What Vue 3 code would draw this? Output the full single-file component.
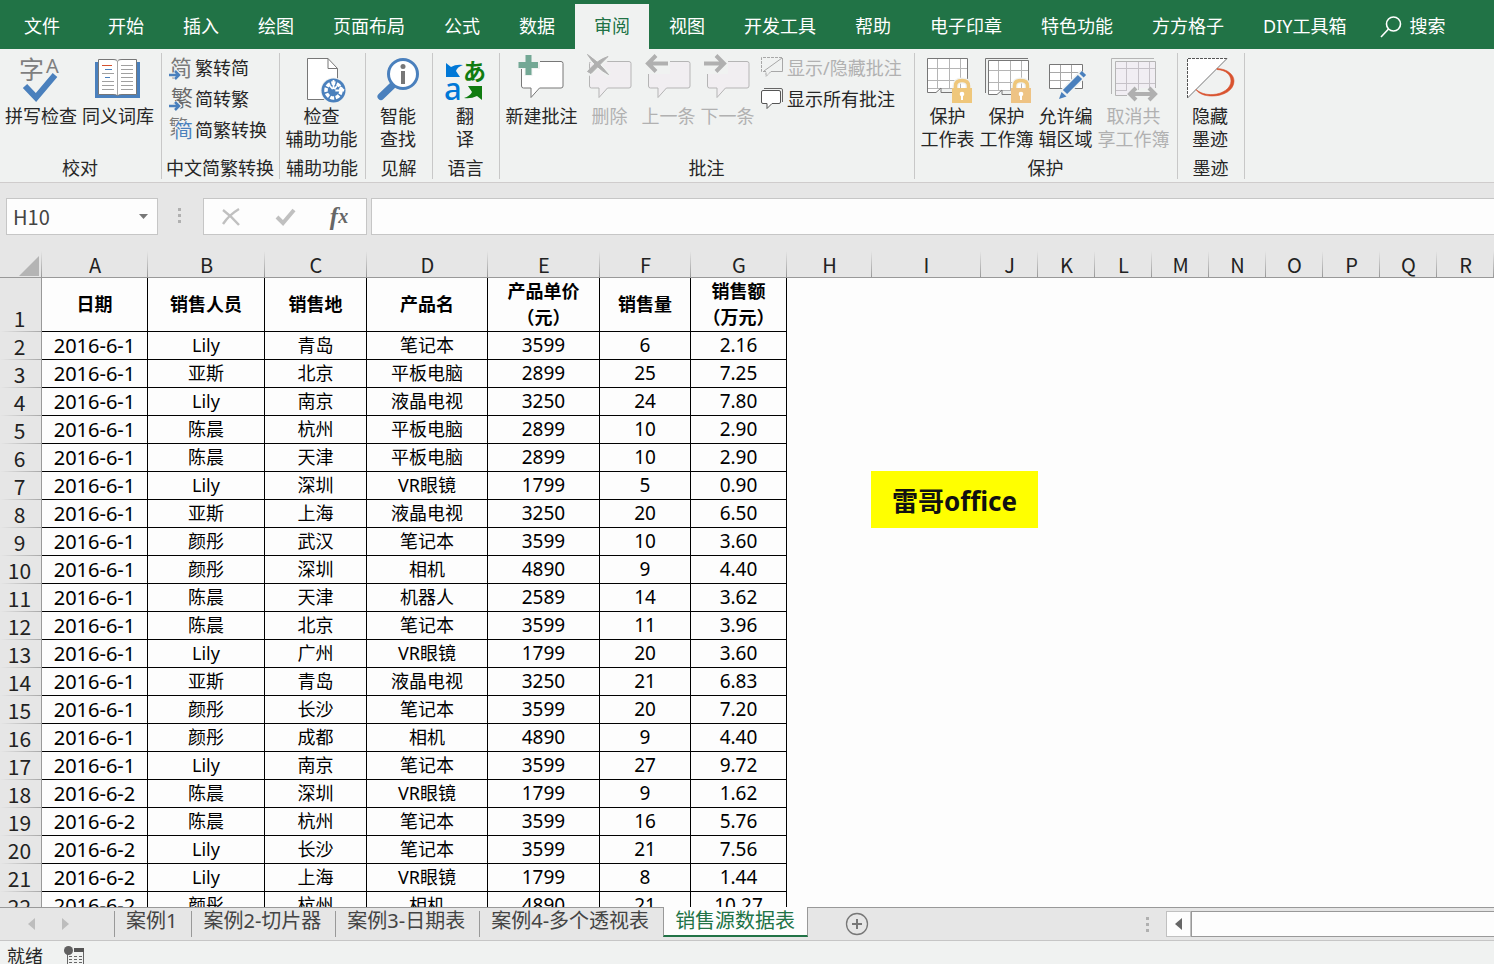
<script setup>
import { ref } from 'vue'

const menu = ['开始', '插入', '绘图', '页面布局', '公式', '数据', '审阅', '视图', '开发工具', '帮助', '电子印章', '特色功能', '方方格子', 'DIY工具箱']
const activeMenu = ref('审阅')

const cellRef = ref('H10')
const formula = ref('')

const columns = [
  ['A', 106], ['B', 117], ['C', 102], ['D', 121], ['E', 112], ['F', 91], ['G', 96], ['H', 85], ['I', 109],
  ['J', 57], ['K', 57], ['L', 57], ['M', 57], ['N', 57], ['O', 57], ['P', 57], ['Q', 57], ['R', 57]
]

const heads = [['日期'], ['销售人员'], ['销售地'], ['产品名'], ['产品单价', '（元）'], ['销售量'], ['销售额', '（万元）']]

const rows = [
  ['2016-6-1', 'Lily', '青岛', '笔记本', '3599', '6', '2.16'],
  ['2016-6-1', '亚斯', '北京', '平板电脑', '2899', '25', '7.25'],
  ['2016-6-1', 'Lily', '南京', '液晶电视', '3250', '24', '7.80'],
  ['2016-6-1', '陈晨', '杭州', '平板电脑', '2899', '10', '2.90'],
  ['2016-6-1', '陈晨', '天津', '平板电脑', '2899', '10', '2.90'],
  ['2016-6-1', 'Lily', '深圳', 'VR眼镜', '1799', '5', '0.90'],
  ['2016-6-1', '亚斯', '上海', '液晶电视', '3250', '20', '6.50'],
  ['2016-6-1', '颜彤', '武汉', '笔记本', '3599', '10', '3.60'],
  ['2016-6-1', '颜彤', '深圳', '相机', '4890', '9', '4.40'],
  ['2016-6-1', '陈晨', '天津', '机器人', '2589', '14', '3.62'],
  ['2016-6-1', '陈晨', '北京', '笔记本', '3599', '11', '3.96'],
  ['2016-6-1', 'Lily', '广州', 'VR眼镜', '1799', '20', '3.60'],
  ['2016-6-1', '亚斯', '青岛', '液晶电视', '3250', '21', '6.83'],
  ['2016-6-1', '颜彤', '长沙', '笔记本', '3599', '20', '7.20'],
  ['2016-6-1', '颜彤', '成都', '相机', '4890', '9', '4.40'],
  ['2016-6-1', 'Lily', '南京', '笔记本', '3599', '27', '9.72'],
  ['2016-6-2', '陈晨', '深圳', 'VR眼镜', '1799', '9', '1.62'],
  ['2016-6-2', '陈晨', '杭州', '笔记本', '3599', '16', '5.76'],
  ['2016-6-2', 'Lily', '长沙', '笔记本', '3599', '21', '7.56'],
  ['2016-6-2', 'Lily', '上海', 'VR眼镜', '1799', '8', '1.44'],
  ['2016-6-2', '颜彤', '杭州', '相机', '4890', '21', '10.27']
]

const sheets = ['案例1', '案例2-切片器', '案例3-日期表', '案例4-多个透视表', '销售源数据表']
const activeSheet = ref('销售源数据表')
</script>

<template>
  <div class="app">
    <nav class="menu">
      <button class="tab file">文件</button>
      <button
        v-for="m in menu"
        :key="m"
        class="tab"
        :class="{ active: m === activeMenu }"
        @click="activeMenu = m"
      >{{ m }}</button>
      <button class="tab search">
        <svg width="22" height="24" viewBox="0 0 22 24" fill="none" stroke="#fff" stroke-width="1.6">
          <circle cx="13.5" cy="9" r="7" />
          <path d="M8.5 14L1 22" />
        </svg>
        <span>搜索</span>
      </button>
    </nav>

    <section class="ribbon">
      <div class="group g-proof">
        <div class="tools">
          <button class="big w77">
            <svg width="50" height="50" viewBox="17 54 50 50">
              <text x="20" y="79" font-size="25" fill="#7f7f7f">字</text>
              <text x="47" y="73" font-size="20" fill="#7f7f7f">A</text>
              <path d="M26 86L37 97.5L56 75" fill="none" stroke="#4a80bd" stroke-width="6" />
            </svg>
            <span>拼写检查</span>
          </button>
          <button class="big w77">
            <svg width="50" height="50" viewBox="93 54 50 50">
              <path d="M95 62H140V98H95Z" fill="#4a80bd" />
              <path d="M98.5 59.5H113Q117.5 59.5 117.5 62Q117.5 59.5 122 59.5H136.5V94.5H122Q117.5 94.5 117.5 96Q117.5 94.5 113 94.5H98.5Z" fill="#fff" stroke="#777" />
              <path d="M117.5 61V95" stroke="#a6a6a6" />
              <path d="M121 65.5H133M121 69.5H133M121 73.5H133M121 77.5H133M121 81.5H133M121 85.5H133M121 89.5H133M102 73.5H114M102 81.5H114M102 85.5H114M102 89.5H114" stroke="#a0a0a0" />
              <path d="M102 65.5H112" stroke="#d35230" />
              <path d="M105 69.5H112M105 77.5H110" stroke="#4a80bd" />
            </svg>
            <span>同义词库</span>
          </button>
        </div>
        <h2>校对</h2>
      </div>

      <div class="group g-chinese">
        <div class="tools minis">
          <button class="mini">
            <svg width="26" height="30" viewBox="168 54 26 30">
              <text x="170" y="76" font-size="22" fill="#7a7a7a">简</text>
              <path d="M169 75H179M175 71L179 75L175 79" fill="none" stroke="#f0f2f1" stroke-width="5" />
              <path d="M169 75H179M175 71L179 75L175 79" fill="none" stroke="#4a80bd" stroke-width="2.5" />
            </svg>
            <span>繁转简</span>
          </button>
          <button class="mini">
            <svg width="26" height="30" viewBox="168 85 26 30">
              <text x="171" y="106" font-size="22" fill="#6a6a6a">繁</text>
              <path d="M169 106H179M175 102L179 106L175 110" fill="none" stroke="#f0f2f1" stroke-width="5" />
              <path d="M169 106H179M175 102L179 106L175 110" fill="none" stroke="#4a80bd" stroke-width="2.5" />
            </svg>
            <span>简转繁</span>
          </button>
          <button class="mini">
            <svg width="26" height="30" viewBox="168 116 26 30">
              <text x="169" y="134" font-size="19" fill="#7a7a7a">繁</text>
              <path d="M175 121H194V141H175Z" fill="#f0f2f1" />
              <text x="174" y="138" font-size="19" fill="#4a80bd">简</text>
            </svg>
            <span>简繁转换</span>
          </button>
        </div>
        <h2>中文简繁转换</h2>
      </div>

      <div class="group g-access">
        <div class="tools">
          <button class="big w77">
            <svg width="50" height="50" viewBox="297 54 50 50">
              <path d="M307.5 58.5H328L337.5 68.5V99.5H307.5Z" fill="#fff" stroke="#777" />
              <path d="M328 58.5V68.5H337.5" fill="none" stroke="#777" />
              <circle cx="333.5" cy="90.5" r="13" fill="#f0f2f1" />
              <circle cx="333.5" cy="90.5" r="12" fill="#4a80bd" />
              <circle cx="333.5" cy="90.5" r="7.5" fill="none" stroke="#fff" stroke-width="3.5" stroke-dasharray="4 1.5" />
              <path d="M333.5 80V89M330 86L333.5 90L337 86M334 90.5H344M340 87L344 90.5" fill="none" stroke="#fff" stroke-width="1.8" />
              <circle cx="333.5" cy="91" r="2" fill="#4a80bd" />
            </svg>
            <span>检查<br>辅助功能</span>
          </button>
        </div>
        <h2>辅助功能</h2>
      </div>

      <div class="group g-small">
        <div class="tools">
          <button class="big w59">
            <svg width="50" height="50" viewBox="374 54 50 50">
              <path d="M394 85L382 96.5" stroke="#4a80bd" stroke-width="7" stroke-linecap="round" />
              <circle cx="404" cy="74" r="14.5" fill="#fff" stroke="#4a80bd" stroke-width="3" />
              <circle cx="404" cy="66.5" r="2.5" fill="#777" />
              <path d="M404 71V84" stroke="#777" stroke-width="4" />
            </svg>
            <span>智能<br>查找</span>
          </button>
        </div>
        <h2>见解</h2>
      </div>

      <div class="group g-small">
        <div class="tools">
          <button class="big w59">
            <svg width="50" height="50" viewBox="441 54 50 50">
              <path d="M447 63L452 67Q457 64 464 65Q458 67 457 71L461 77H447Z" fill="#0078d7" />
              <text x="464" y="80" font-size="23" font-weight="700" fill="#107c10">あ</text>
              <text x="445" y="100" font-size="31" font-weight="500" fill="#0078d7">a</text>
              <path d="M469 86H483V100L478 96Q472 99 465 98Q471 96 473 92Z" fill="#107c10" />
            </svg>
            <span>翻<br>译</span>
          </button>
        </div>
        <h2>语言</h2>
      </div>

      <div class="group g-comment">
        <div class="tools">
          <button class="big w77">
            <svg width="50" height="50" viewBox="517 54 50 50">
              <path d="M523.5 61.5H561Q563 61.5 563 63.5V86Q563 88 561 88H539.5L531 97.5V88H523.5Q521.5 88 521.5 86V63.5Q521.5 61.5 523.5 61.5Z" fill="#fff" stroke="#777" />
              <path d="M528.5 54V76M517 65H540" stroke="#f0f2f1" stroke-width="8" />
              <path d="M528.5 55V75M518.5 65H538" stroke="#73a895" stroke-width="6" />
            </svg>
            <span>新建批注</span>
          </button>
          <button class="big w59" disabled>
            <svg width="50" height="50" viewBox="585 54 50 50">
              <path d="M591.5 61.5H629Q631 61.5 631 63.5V86Q631 88 629 88H607.5L599 97.5V88H591.5Q589.5 88 589.5 86V63.5Q589.5 61.5 591.5 61.5Z" fill="#f1eef1" stroke="#b5b5b5" />
              <path d="M587 55L609 75M609 56L588 74" stroke="#f0f2f1" stroke-width="6" />
              <path d="M587.5 54.5Q599 62 608.5 74.5Q596 68 587.5 54.5ZM608 56.5L591 73.5L587.5 71.5Q597 60 608 56.5Z" fill="#b0b0b0" stroke="#b0b0b0" />
            </svg>
            <span>删除</span>
          </button>
          <button class="big w59" disabled>
            <svg width="50" height="50" viewBox="643 54 50 50">
              <path d="M649.5 61.5H687Q689 61.5 689 63.5V86Q689 88 687 88H665.5L657 97.5V88H649.5Q647.5 88 647.5 86V63.5Q647.5 61.5 649.5 61.5Z" fill="#f1eef1" stroke="#b5b5b5" />
              <path d="M643 54H669V74H643Z" fill="#f0f2f1" />
              <path d="M667 63.5H648M655 55.5L647 63.5L655 71.5" fill="none" stroke="#b0b0b0" stroke-width="4" />
            </svg>
            <span>上一条</span>
          </button>
          <button class="big w59" disabled>
            <svg width="50" height="50" viewBox="702 54 50 50">
              <path d="M708.5 61.5H746Q748 61.5 748 63.5V86Q748 88 746 88H724.5L716 97.5V88H708.5Q706.5 88 706.5 86V63.5Q706.5 61.5 708.5 61.5Z" fill="#f1eef1" stroke="#b5b5b5" />
              <path d="M702 54H727V74H702Z" fill="#f0f2f1" />
              <path d="M703 63.5H722M715 55.5L723 63.5L715 71.5" fill="none" stroke="#b0b0b0" stroke-width="4" />
            </svg>
            <span>下一条</span>
          </button>
          <div class="minis">
            <button class="mini" disabled>
              <svg width="26" height="30" viewBox="760 54 26 30">
                <path d="M771 71.5H782.5V58" fill="none" stroke="#a8a8a8" />
                <path d="M782 57.5H761.5V71.5H766V76.5L771 71.5" fill="none" stroke="#a8a8a8" stroke-dasharray="3 1" />
                <path d="M764 71L782 58" stroke="#a8a8a8" />
              </svg>
              <span>显示/隐藏批注</span>
            </button>
            <button class="mini">
              <svg width="26" height="30" viewBox="760 85 26 30">
                <path d="M764 88.5H781Q782.5 88.5 782.5 90V102" fill="none" stroke="#666" />
                <path d="M763 90.5H779Q780.5 90.5 780.5 92V102Q780.5 103.5 779 103.5H772L767 108.5V103.5H763Q761.5 103.5 761.5 102V92Q761.5 90.5 763 90.5Z" fill="#fff" stroke="#555" />
              </svg>
              <span>显示所有批注</span>
            </button>
          </div>
        </div>
        <h2>批注</h2>
      </div>

      <div class="group g-protect">
        <div class="tools">
          <button class="big w59">
            <svg width="50" height="50" viewBox="923 54 50 50">
              <path d="M927.5 58.5H967.5V88H944L936 92.5H927.5Z" fill="#fff" />
              <path d="M937.5 58V88M949.5 58V88M960.5 58V88M927 68.5H967M927 80.5H967M927 88.5H955" stroke="#b5b5b5" />
              <path d="M967.5 82V58.5H927.5V92.5H936L941 88V92.5H954" fill="none" stroke="#777" />
              <path d="M955.5 89V86Q955.5 80.5 962 80.5Q968.5 80.5 968.5 86V89" fill="none" stroke="#f0f2f1" stroke-width="6" />
              <path d="M955.5 89V86Q955.5 80.5 962 80.5Q968.5 80.5 968.5 86V89" fill="none" stroke="#efc77b" stroke-width="3.5" />
              <path d="M952 88H972V103H952Z" fill="#efc77b" />
              <path d="M962 95V100" stroke="#fff" stroke-width="2" /><circle cx="962" cy="94" r="2.3" fill="#fff" />
            </svg>
            <span>保护<br>工作表</span>
          </button>
          <button class="big w59">
            <svg width="50" height="50" viewBox="982 54 50 50">
              <path d="M988.5 60.5H1028.5V90H1004L996 94.5H988.5Z" fill="#fff" />
              <path d="M998.5 61V90M1010.5 61V90M1021.5 61V90M988 70.5H1028M988 82.5H1028M988 90.5H1012" stroke="#b5b5b5" />
              <path d="M985.5 93V58.5H1028M1028.5 82V60.5H988.5V94.5H997L1002 90V94.5H1011" fill="none" stroke="#777" />
              <path d="M1014.5 89V86Q1014.5 80.5 1021 80.5Q1027.5 80.5 1027.5 86V89" fill="none" stroke="#f0f2f1" stroke-width="6" />
              <path d="M1014.5 89V86Q1014.5 80.5 1021 80.5Q1027.5 80.5 1027.5 86V89" fill="none" stroke="#efc77b" stroke-width="3.5" />
              <path d="M1011 88H1031V103H1011Z" fill="#eec384" />
              <path d="M1021 95V100" stroke="#fff" stroke-width="2" /><circle cx="1021" cy="94" r="2.3" fill="#fff" />
            </svg>
            <span>保护<br>工作簿</span>
          </button>
          <button class="big w59">
            <svg width="50" height="50" viewBox="1041 54 50 50">
              <path d="M1049.5 64.5H1082.5V88.5H1049.5Z" fill="#fff" stroke="#777" />
              <path d="M1060.5 65V88M1071.5 65V88M1050 72.5H1082M1050 80.5H1082" stroke="#a8a8a8" />
              <path d="M1060 97L1084 73" stroke="#f0f2f1" stroke-width="9" />
              <path d="M1065 92L1080 77M1081.5 75.5L1084 73" stroke="#4a80bd" stroke-width="6" />
              <path d="M1059 99L1061.5 92L1066.5 96.5Z" fill="#4a80bd" />
            </svg>
            <span>允许编<br>辑区域</span>
          </button>
          <button class="big w77" disabled>
            <svg width="50" height="50" viewBox="1109 54 50 50">
              <path d="M1115.5 61.5H1155.5V88H1132L1128 95H1115.5Z" fill="#f1eef3" />
              <path d="M1126.5 62V90M1138.5 62V90M1149.5 62V90M1115 68.5H1155M1115 83.5H1155M1115 90.5H1127" stroke="#c6c2c8" />
              <path d="M1111.5 94V58.5H1154M1155.5 88V61.5H1115.5V95.5H1127" fill="none" stroke="#b5b5b5" />
              <path d="M1129 94H1156M1136 88L1130 94L1136 100M1149 88L1155 94L1149 100" fill="none" stroke="#b0b0b0" stroke-width="4" />
            </svg>
            <span>取消共<br>享工作簿</span>
          </button>
        </div>
        <h2>保护</h2>
      </div>

      <div class="group g-small">
        <div class="tools">
          <button class="big w59">
            <svg width="50" height="50" viewBox="1185 54 50 50">
              <path d="M1187.5 58.5H1227L1187.5 98Z" fill="#fff" />
              <path d="M1227 58.5H1187.5V98" fill="none" stroke="#555" stroke-dasharray="3 1" />
              <path d="M1227 58.5L1187.5 98" stroke="#777" />
              <path d="M1217 68.5C1228 69 1234 75 1234 81C1234 90 1224 96 1212 96C1205 96 1199 94 1196 89.5C1200 93 1206 95 1213 94.5C1223 94 1231 88 1231 81C1231 75 1226 70 1217 69.5Z" fill="#d9532f" stroke="#d9532f" stroke-width="0.6" />
            </svg>
            <span>隐藏<br>墨迹</span>
          </button>
        </div>
        <h2>墨迹</h2>
      </div>
    </section>

    <section class="formula-bar">
      <div class="name-box">
        <input v-model="cellRef" aria-label="名称框">
        <button aria-label="展开名称框">
          <svg width="9" height="5" viewBox="0 0 9 5"><path d="M0 0H9L4.5 5Z" fill="#777" /></svg>
        </button>
      </div>
      <span class="dots"><i></i><i></i><i></i></span>
      <div class="fx-box">
        <button aria-label="取消">
          <svg width="20" height="18" viewBox="0 0 20 18" fill="none" stroke="#c0c0c0" stroke-width="2.4"><path d="M2 2Q10 8 18 17M18 1Q8 7 2 16" /></svg>
        </button>
        <button aria-label="输入">
          <svg width="20" height="18" viewBox="0 0 20 18" fill="none" stroke="#c0c0c0" stroke-width="4"><path d="M2 9L8 15L19 2" /></svg>
        </button>
        <button class="fx" aria-label="插入函数"><span>f</span><small>x</small></button>
      </div>
      <input v-model="formula" class="formula" aria-label="编辑栏">
    </section>

    <main class="grid">
      <table>
        <colgroup>
          <col class="c-num">
          <col v-for="c in columns" :key="c[0]" :style="{ width: c[1] + 'px' }">
        </colgroup>
        <thead>
          <tr>
            <th class="corner"><svg width="20" height="20" viewBox="0 0 20 20"><path d="M20 0V20H0Z" fill="#b4b4b4" /></svg></th>
            <th v-for="c in columns" :key="c[0]" class="col" scope="col">{{ c[0] }}</th>
          </tr>
        </thead>
        <tbody>
          <tr class="title">
            <th class="row" scope="row">1</th>
            <td v-for="h in heads" :key="h[0]"><div v-for="line in h" :key="line">{{ line }}</div></td>
          </tr>
          <tr v-for="(r, i) in rows" :key="i">
            <th class="row" scope="row">{{ i + 2 }}</th>
            <td v-for="(v, j) in r" :key="j" :class="{ date: j === 0, num: j > 3 }">{{ v }}</td>
          </tr>
        </tbody>
      </table>
      <div class="note">雷哥office</div>
    </main>

    <footer class="sheet-bar">
      <div class="arrows">
        <button aria-label="上一个工作表"><svg width="7" height="12" viewBox="0 0 7 12"><path d="M7 0V12L0 6Z" fill="#bdbdbd" /></svg></button>
        <button aria-label="下一个工作表"><svg width="7" height="12" viewBox="0 0 7 12"><path d="M0 0V12L7 6Z" fill="#bdbdbd" /></svg></button>
      </div>
      <button
        v-for="s in sheets"
        :key="s"
        class="sheet"
        :class="{ active: s === activeSheet }"
        @click="activeSheet = s"
      >{{ s }}</button>
      <button class="add" aria-label="新工作表">
        <svg width="24" height="24" viewBox="0 0 24 24" fill="none" stroke="#777">
          <circle cx="12" cy="12" r="10.5" stroke-width="1.3" />
          <path d="M12 7V17M7 12H17" stroke-width="2" />
        </svg>
      </button>
      <span class="dots"><i></i><i></i><i></i></span>
      <button class="scroll-left" aria-label="向左滚动"><svg width="7" height="12" viewBox="0 0 7 12"><path d="M7 0V12L0 6Z" fill="#666" /></svg></button>
      <div class="track"></div>
    </footer>

    <div class="status">
      <span>就绪</span>
      <svg width="21" height="18" viewBox="64 946 21 18">
        <path d="M67.5 952V964M83.5 950V964" stroke="#666" />
        <path d="M74 948H84V952H74Z" fill="#555" />
        <circle cx="68.5" cy="950.5" r="4.5" fill="#606060" />
        <path d="M69 956.5H82M69 959.5H82M69 962.5H82" stroke="#666" stroke-dasharray="3 2" />
      </svg>
    </div>
  </div>
</template>

<style>
body { margin: 0; }
</style>

<style scoped>
.app {
  display: flex;
  flex-direction: column;
  height: 100vh;
  overflow: hidden;
  background: #e6e6e6;
  color: #262626;
  font-family: "Noto Sans", "Noto Sans CJK SC", sans-serif;
  font-size: 18px;
}
button, input {
  font: inherit;
  color: inherit;
  background: none;
  border: 0;
  padding: 0;
  margin: 0;
  border-radius: 0;
  outline: 0;
}
button { white-space: nowrap; }
svg { display: block; flex: none; overflow: visible; }

.menu {
  flex: none;
  display: flex;
  gap: 1px;
  height: 45px;
  padding-top: 4px;
  background: #217346;
  color: #fff;
}
.tab { padding: 0 19px; line-height: 43px; }
.tab.file { padding: 0 28px 0 24px; }
.tab.active { background: #f0f2f1; color: #217346; }
.tab.search { display: flex; align-items: center; gap: 7px; padding: 0 14px; }

.ribbon {
  flex: none;
  display: flex;
  height: 133px;
  background: #f0f2f1;
  border-bottom: 1px solid #cfcccc;
  overflow: hidden;
}
.group {
  flex: none;
  box-sizing: border-box;
  display: flex;
  flex-direction: column;
  justify-content: space-between;
  height: 126px;
  margin-top: 4px;
  border-right: 1px solid #c8c8c8;
}
.tools { display: flex; align-items: flex-start; justify-content: center; padding: 1px 2px 0 0; }
.group h2 {
  margin: 0;
  padding-right: 1px;
  font-size: 18px;
  font-weight: 400;
  line-height: 22px;
  height: 22px;
  text-align: center;
  white-space: nowrap;
}
.g-proof { width: 162px; }
.g-chinese { width: 118px; }
.g-access { width: 86px; }
.g-small { width: 67px; }
.g-comment { width: 415px; }
.g-comment .tools { justify-content: flex-start; padding-left: 3px; }
.g-protect { width: 263px; }
.big { display: flex; flex-direction: column; align-items: center; line-height: 23px; }
.big span { padding-top: 1px; text-align: center; }
.w77 { width: 77px; }
.w59 { width: 59px; }
.big:disabled, .mini:disabled { color: #b1b1b1; }
.minis { display: flex; flex-direction: column; align-items: flex-start; gap: 1px; }
.g-chinese .minis { padding: 1px 0 0 6px; }
.g-comment .minis { padding-left: 3px; }
.mini { display: flex; align-items: center; gap: 1px; height: 30px; }
.mini span { padding-bottom: 4px; }

.formula-bar { flex: none; display: flex; height: 37px; padding: 15px 0 16px 6px; }
.name-box {
  box-sizing: border-box;
  display: flex;
  align-items: center;
  width: 152px;
  border: 1px solid #c6c6c6;
  background: #fdfdfd;
}
.name-box input { flex: 1; min-width: 0; padding-left: 6px; font-family: "Noto Sans CJK SC", sans-serif; font-size: 20px; color: #444; }
.name-box button { width: 28px; display: flex; justify-content: center; }
.dots { display: flex; flex-direction: column; justify-content: center; gap: 3px; }
.dots i { width: 3px; height: 3px; background: #b0b0b0; }
.formula-bar .dots { padding: 0 22px 2px 20px; }
.fx-box {
  box-sizing: border-box;
  display: flex;
  width: 164px;
  border: 1px solid #c6c6c6;
  background: #fdfdfd;
}
.fx-box button { flex: 1; display: flex; align-items: center; justify-content: center; }
.fx { font-family: "Liberation Serif", serif; font-style: italic; font-weight: 700; color: #666; }
.fx span { font-size: 25px; line-height: 30px; }
.fx small { font-size: 20px; }
.formula {
  flex: 1;
  box-sizing: border-box;
  min-width: 0;
  margin-left: 4px;
  border: 1px solid #c6c6c6;
  border-right: 0;
  background: #fdfdfd;
}

.grid { flex: 1; min-height: 0; position: relative; overflow: hidden; background: #fdfdfd; }
table { table-layout: fixed; border-collapse: separate; border-spacing: 0; width: 1494px; }
.c-num { width: 42px; }
th, td { box-sizing: border-box; padding: 0; font-weight: 400; text-align: center; white-space: nowrap; }
th { font-family: "Noto Sans CJK SC", sans-serif; background: #e6e6e6; color: #222; }
.col, .corner {
  height: 27px;
  padding-top: 2px;
  border-bottom: 1px solid #999;
  background: linear-gradient(#e6e6e6, #999) right / 1px 100% no-repeat #e6e6e6;
  font-size: 20px;
  line-height: 24px;
}
.corner svg { margin: 1px 3px 0 auto; }
.row {
  height: 28px;
  border-right: 1px solid #999;
  background: linear-gradient(90deg, #e6e6e6, #a8a8a8) bottom / 100% 1px no-repeat #e6e6e6;
  font-size: 21px;
  line-height: 24px;
  vertical-align: bottom;
  padding: 0 2px 2px 0;
}
td { border-right: 1px solid #000; border-bottom: 1px solid #000; color: #000; line-height: 27px; }
td.date { font-size: 20px; }
td.num { font-size: 19px; }
.title td { height: 54px; padding-bottom: 1px; font-weight: 700; line-height: 26px; }
.note {
  position: absolute;
  left: 871px;
  top: 220px;
  width: 167px;
  height: 57px;
  background: #ff0;
  color: #111;
  font-size: 26px;
  font-weight: 700;
  line-height: 60px;
  text-align: center;
}

.sheet-bar {
  flex: none;
  box-sizing: border-box;
  display: flex;
  height: 34px;
  border-top: 1px solid #999;
  border-bottom: 1px solid #c6c6c6;
  color: #444;
}
.arrows { display: flex; align-items: center; gap: 27px; width: 86px; padding-left: 28px; }
.sheet {
  height: 26px;
  margin-top: 3px;
  padding: 0 14px 6px 11px;
  border-left: 1px solid #999;
  font-size: 20px;
  line-height: 20px;
}
.sheet.active {
  height: 30px;
  margin-top: -1px;
  padding: 0 12px 0 11px;
  background: #fdfdfd;
  border-right: 1px solid #999;
  border-bottom: 2px solid #217346;
  color: #217346;
}
.add { margin-left: 37px; }
.sheet-bar .dots { margin-left: auto; padding-right: 17px; }
.scroll-left {
  display: flex;
  align-items: center;
  justify-content: center;
  box-sizing: border-box;
  width: 25px;
  height: 26px;
  margin-top: 3px;
  border: 1px solid #c0c0c0;
  background: #fdfdfd;
}
.track {
  box-sizing: border-box;
  width: 303px;
  height: 26px;
  margin-top: 3px;
  border: 1px solid #999;
  border-right: 0;
  background: #fdfdfd;
}
.status {
  flex: none;
  box-sizing: border-box;
  display: flex;
  gap: 21px;
  height: 23px;
  padding: 5px 7px 0;
  overflow: hidden;
  background: #f0f2f1;
  line-height: 21px;
}
</style>
